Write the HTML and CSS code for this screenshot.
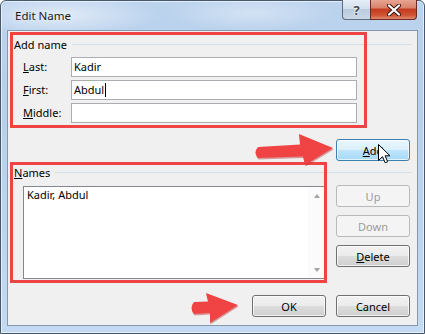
FILE: index.html
```html
<!DOCTYPE html>
<html>
<head>
<meta charset="utf-8">
<link rel="stylesheet" href="styles.css">
</head>
<body>
<div class="window">
  <div class="titlebar">
    <span class="title">Edit Name</span>
    <div class="caption-btns">
      <div class="cbtn help">?</div>
      <div class="cbtn close">
        <svg width="14" height="12" viewBox="0 0 14 12"><path d="M2,1.5 L12,10.5 M12,1.5 L2,10.5" stroke="#3b1a14" stroke-width="4.2" stroke-linecap="round"/><path d="M2,1.5 L12,10.5 M12,1.5 L2,10.5" stroke="#ffffff" stroke-width="2.2" stroke-linecap="round"/></svg>
      </div>
    </div>
  </div>
  <div class="client">
    <div class="section-head"><span>Add name</span><i class="rule"></i></div>
    <div class="form">
      <label class="lbl"><u>L</u>ast:</label><div class="input">Kadir</div>
      <label class="lbl"><u>F</u>irst:</label><div class="input">Abdul<span class="caret"></span></div>
      <label class="lbl"><u>M</u>iddle:</label><div class="input"></div>
    </div>
    <div class="add-row"><div class="btn hover"><u>A</u>dd</div></div>
    <div class="section-head names-head"><span><u>N</u>ames</span><i class="rule"></i></div>
    <div class="names-row">
      <div class="listbox">
        <div class="items"><div class="item">Kadir, Abdul</div></div>
        <div class="vscroll">
          <div class="sarrow"><span class="tri up"></span></div>
          <div class="sarrow"><span class="tri down"></span></div>
        </div>
      </div>
      <div class="side-btns">
        <div class="btn disabled">Up</div>
        <div class="btn disabled">Down</div>
        <div class="btn"><u>D</u>elete</div>
      </div>
    </div>
    <div class="footer">
      <div class="btn">OK</div>
      <div class="btn">Cancel</div>
    </div>
  </div>

  <div class="redbox box1"></div>
  <div class="redbox box2"></div>
  <svg class="annot" width="425" height="334" viewBox="0 0 425 334">
    <path d="M258,147 L300,144.5 L299,134 L333,148 L305,165 L303,156.5 L258,158 Q253,152.5 258,147 Z" fill="#b83030" opacity="0.45" transform="translate(0.5,1.5)"/>
    <path d="M258,147 L300,144.5 L299,134 L333,148 L305,165 L303,156.5 L258,158 Q253,152.5 258,147 Z" fill="#f04444"/>
    <path d="M194,302 L208,301.5 L206,293 L238,305 L210,323 L210,313 L194,314 Q189,308 194,302 Z" fill="#b83030" opacity="0.45" transform="translate(0.5,1.5)"/>
    <path d="M194,302 L208,301.5 L206,293 L238,305 L210,323 L210,313 L194,314 Q189,308 194,302 Z" fill="#f04444"/>
    <g transform="translate(378,144)">
      <path d="M0.5,0.5 L0.5,16.5 L4.5,12.7 L7.2,18.8 L9.7,17.7 L7.1,11.8 L12,11.8 Z" fill="#ffffff" stroke="#000000" stroke-width="1" stroke-linejoin="miter"/>
    </g>
  </svg>
</div>
</body>
</html>
```

FILE: styles.css
```css
html, body {
  margin: 0;
  padding: 0;
}
body {
  width: 425px;
  height: 334px;
  overflow: hidden;
  background: #ffffff;
  font-family: "Noto Sans", "Open Sans", sans-serif;
  font-size: 11px;
  color: #000;
}
.window {
  position: relative;
  box-sizing: border-box;
  width: 425px;
  height: 334px;
  border: 1px solid #46586c;
  border-radius: 6px 6px 0 0;
  padding: 0 6px 7px 6px;
  display: flex;
  flex-direction: column;
  background:
    radial-gradient(ellipse 140px 30px at 60px 14px, rgba(255,255,255,0.55), rgba(255,255,255,0) 70%),
    radial-gradient(ellipse 120px 26px at 250px 12px, rgba(255,255,255,0.35), rgba(255,255,255,0) 70%),
    linear-gradient(180deg, #bcd3ee 0%, #b6cfeb 30%, #bcd5ef 70%, #c3daf2 100%);
  box-shadow: inset 0 0 0 1px rgba(255,255,255,0.6);
}
.titlebar {
  height: 29px;
  display: flex;
  justify-content: space-between;
  align-items: center;
}
.title {
  padding-left: 8px;
  font-size: 11.5px;
  color: #1a1a1a;
  text-shadow: 0 0 6px rgba(255,255,255,0.9);
}
.caption-btns {
  align-self: flex-start;
  margin-top: -1px;
  margin-right: 1px;
  display: flex;
}
.cbtn {
  box-sizing: border-box;
  height: 20px;
  display: flex;
  align-items: center;
  justify-content: center;
  border: 1px solid #5d6d80;
  border-top: none;
}
.help {
  width: 28px;
  border-radius: 0 0 0 4px;
  border-right: none;
  background: linear-gradient(180deg, #e6eef7 0%, #d3dfec 45%, #bccbdc 50%, #c9d7e6 100%);
  font-weight: bold;
  font-size: 13px;
  color: #3e4a5a;
  text-shadow: 0 0 2px #ffffff, 0 0 2px #ffffff;
}
.close {
  width: 47px;
  border-radius: 0 0 4px 0;
  border-color: #6a2b22;
  background: linear-gradient(180deg, #e8a593 0%, #d9836c 40%, #c53b20 50%, #cf5334 80%, #e08a6a 100%);
}
.client {
  flex: 1;
  box-sizing: border-box;
  border: 1px solid #8798ab;
  background: #f0f0f0;
  padding: 5px 7px 0 6px;
  display: flex;
  flex-direction: column;
}
.section-head {
  height: 16px;
  display: flex;
  align-items: center;
  white-space: nowrap;
}
.rule {
  flex: 1;
  height: 1px;
  background: #d5dfe5;
  margin-left: 5px;
  margin-right: -2px;
}
.form {
  margin-top: 5px;
  padding-left: 9px;
  display: grid;
  grid-template-columns: 48px 286px;
  grid-auto-rows: 20px;
  row-gap: 3px;
}
.lbl {
  display: flex;
  align-items: center;
  padding-bottom: 2px;
}
.input {
  box-sizing: border-box;
  height: 20px;
  border: 1px solid #abadb3;
  background: #ffffff;
  padding-left: 2px;
  line-height: 18px;
  display: flex;
  align-items: center;
}
.caret {
  display: inline-block;
  width: 1px;
  height: 14px;
  background: #000;
  margin-left: 1px;
}
.add-row {
  margin-top: 16px;
  display: flex;
  justify-content: flex-end;
}
.btn {
  box-sizing: border-box;
  width: 74px;
  height: 22px;
  border: 1px solid #707070;
  border-radius: 3px;
  background: linear-gradient(180deg, #f2f2f2 0%, #ebebeb 50%, #dddddd 50%, #cfcfcf 100%);
  box-shadow: inset 0 0 0 1px rgba(255,255,255,0.7);
  display: flex;
  align-items: center;
  justify-content: center;
  color: #000;
}
.btn.hover {
  border-color: #3c7fb1;
  background: linear-gradient(180deg, #eaf6fd 0%, #d9f0fc 50%, #bee6fd 50%, #a7d9f5 100%);
}
.btn.disabled {
  border-color: #b6babd;
  background: #f4f4f4;
  box-shadow: none;
  color: #9c9c9c;
}
.names-head {
  margin-top: 3px;
}
.names-row {
  margin-top: 6px;
  display: flex;
  align-items: flex-start;
  gap: 10px;
}
.listbox {
  box-sizing: border-box;
  margin-left: 9px;
  width: 303px;
  height: 93px;
  border: 1px solid #828790;
  background: #ffffff;
  display: flex;
}
.items {
  flex: 1;
  padding: 1px 3px;
}
.item {
  line-height: 14px;
}
.vscroll {
  width: 17px;
  background: #fbfbfb;
  display: flex;
  flex-direction: column;
  justify-content: space-between;
}
.sarrow {
  height: 17px;
  display: flex;
  align-items: center;
  justify-content: center;
}
.tri {
  width: 0;
  height: 0;
  border-left: 3.5px solid transparent;
  border-right: 3.5px solid transparent;
}
.tri.up {
  border-bottom: 4px solid #a3a3a3;
}
.tri.down {
  border-top: 4px solid #a3a3a3;
}
.side-btns {
  margin-top: -1px;
  display: flex;
  flex-direction: column;
  gap: 8px;
}
.footer {
  margin-top: 16px;
  display: flex;
  justify-content: flex-end;
  gap: 10px;
}
.redbox {
  position: absolute;
  box-sizing: border-box;
  border: 3px solid #f04444;
}
.box1 {
  left: 9px;
  top: 31px;
  width: 357px;
  height: 96px;
}
.box2 {
  left: 9px;
  top: 161px;
  width: 317px;
  height: 121px;
}
.annot {
  position: absolute;
  left: -1px;
  top: -1px;
  pointer-events: none;
}
```
